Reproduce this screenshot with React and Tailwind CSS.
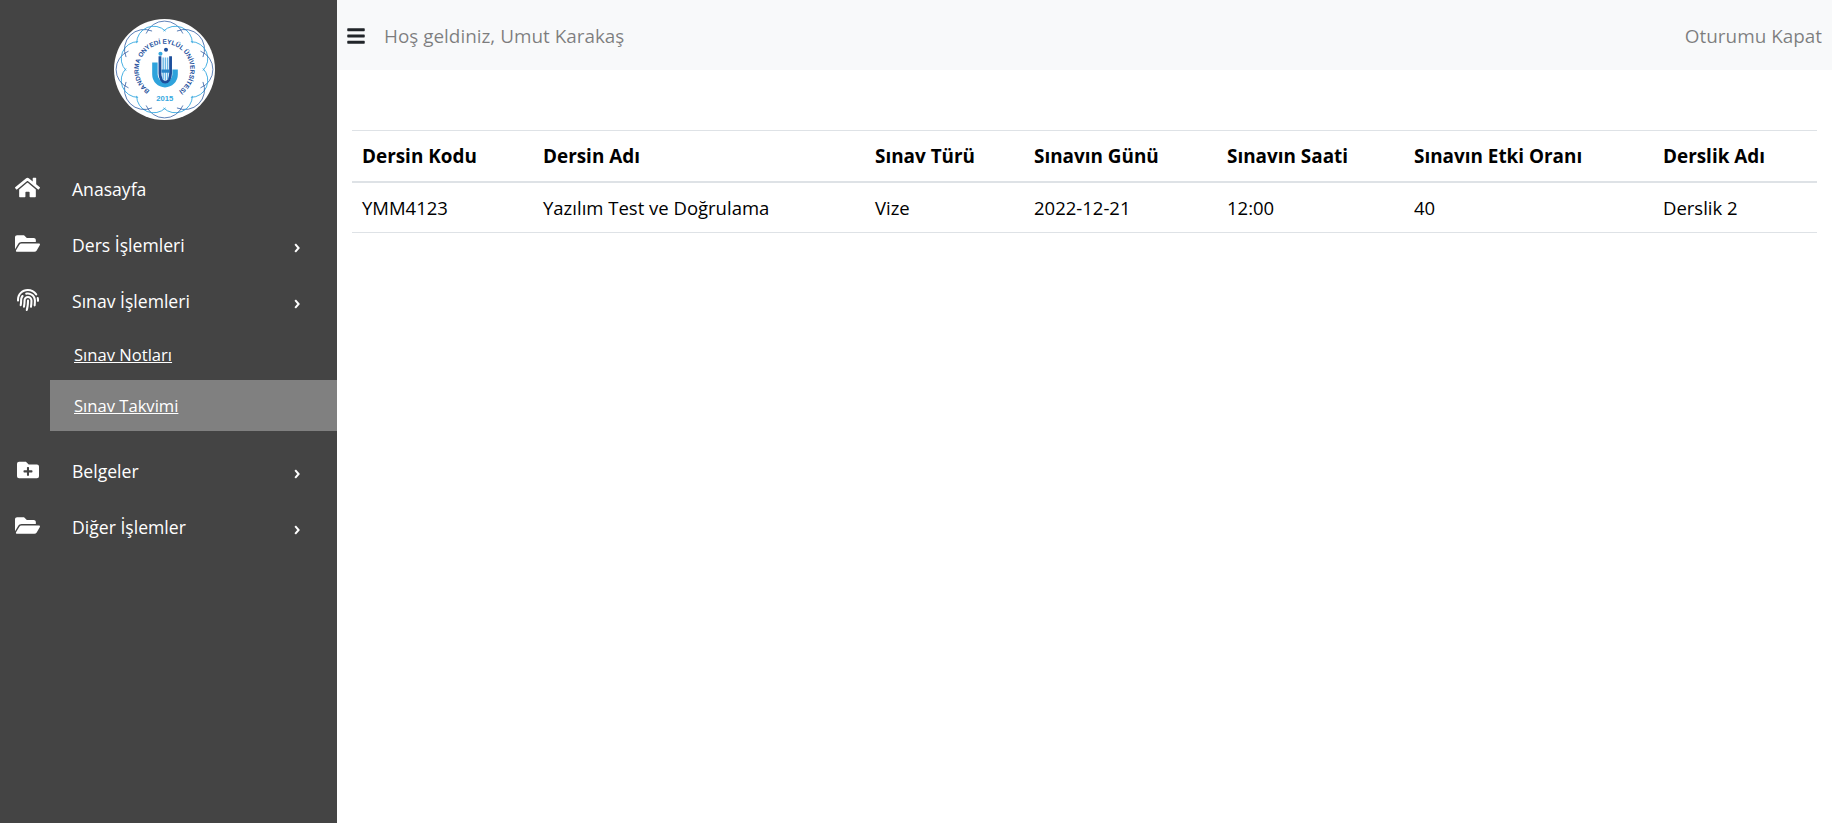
import React from "react";
import { FaHome, FaFolderOpen, FaFingerprint, FaFolderPlus, FaBars } from "react-icons/fa";

function Logo() {
  const angles = [0, 45, 90, 135, 180, 225, 270, 315];
  return (
    <svg viewBox="0 0 100 100" className="w-[101px] h-[101px] block">
      <circle cx="50" cy="50" r="50" fill="#fff" />
      {angles.map((a) => (
        <g key={a} fill="none">
          <path d="M31.8 14.4 A19.6 19.6 0 0 1 68.2 14.4" stroke="#1d4f9c" strokeWidth="0.7" transform={`rotate(${a} 50 50)`} />
          <path d="M34.5 15.3 A16.8 16.8 0 0 1 65.5 15.3" stroke="#35a8e0" strokeWidth="0.8" transform={`rotate(${a + 22.5} 50 50)`} />
        </g>
      ))}
      <circle cx="50" cy="50" r="32" fill="#fff" />
      <defs>
        <path id="logoArc" d="M35.4 70.9 A25.5 25.5 0 1 1 64.6 70.9" />
      </defs>
      <text fontSize="6.4" fontWeight="700" fill="#1d4f9c" fontFamily="'Liberation Sans', sans-serif">
        <textPath href="#logoArc" startOffset="0" textLength="129" lengthAdjust="spacing">BANDIRMA ONYEDİ EYLÜL ÜNİVERSİTESİ</textPath>
      </text>
      <path d="M40.5 43 V55 A10 10 0 0 0 60.5 55 V50" fill="none" stroke="#2fa3dc" strokeWidth="5.4" />
      <path d="M45.5 37 V54 A5.2 8.5 0 0 0 56 54 V37" fill="#fff" stroke="#1d4f9c" strokeWidth="2.8" />
      <path d="M48 38 h1.4 v22 h-1.4 Z M50.2 38 h1.4 v23 h-1.4 Z M52.4 38 h1.4 v22 h-1.4 Z" fill="#6db9e6" />
      <path d="M47 50 h8 v3.2 h-8 Z" fill="#2a86c8" />
      <circle cx="46" cy="34.5" r="2" fill="#35a8e0" />
      <circle cx="51.5" cy="30.5" r="2" fill="#1d4f9c" />
      <text x="50.3" y="81" fontSize="7.6" fontWeight="700" textAnchor="middle" fill="#35a8e0" fontFamily="'Liberation Sans', sans-serif">2015</text>
    </svg>
  );
}

function Chevron() {
  return (
    <svg viewBox="0 0 6 10" className="w-[6px] h-[10px] mt-[5px]">
      <path d="M1.2 1.2 L4.6 5 L1.2 8.8" fill="none" stroke="#fff" strokeWidth="2" />
    </svg>
  );
}

function Item({ icon: Icon, label, arrow = true, iconClass }) {
  return (
    <div className="flex items-center h-[56px] pl-[15px] pr-[37px] text-white">
      <span className="w-[57px] flex items-center mb-[3px]"><Icon className={iconClass} /></span>
      <span className="flex-1 text-[17.6px]">{label}</span>
      {arrow && <Chevron />}
    </div>
  );
}

const cols = ["w-[181px]", "w-[332px]", "w-[159px]", "w-[193px]", "w-[187px]", "w-[249px]", ""];
const heads = ["Dersin Kodu", "Dersin Adı", "Sınav Türü", "Sınavın Günü", "Sınavın Saati", "Sınavın Etki Oranı", "Derslik Adı"];
const row = ["YMM4123", "Yazılım Test ve Doğrulama", "Vize", "2022-12-21", "12:00", "40", "Derslik 2"];

export default function App() {
  return (
    <div className="flex h-screen overflow-hidden bg-white font-['Open_Sans','Noto_Sans',sans-serif]">
      <aside className="w-[337px] shrink-0 bg-[#444444]">
        <div className="h-[161px] flex justify-center pt-[19px] pr-[9px]"><Logo /></div>
        <Item icon={FaHome} label="Anasayfa" arrow={false} iconClass="text-[25px]" />
        <Item icon={FaFolderOpen} label="Ders İşlemleri" iconClass="text-[25px]" />
        <Item icon={FaFingerprint} label="Sınav İşlemleri" iconClass="text-[22px] ml-[2px]" />
        <div className="pl-[50px] mb-[12px] text-white text-[16.6px]">
          <div className="h-[51px] flex items-center pl-[24px] pt-[1px]"><span className="underline">Sınav Notları</span></div>
          <div className="h-[51px] flex items-center pl-[24px] pt-[1px] bg-[#808080]"><span className="underline">Sınav Takvimi</span></div>
        </div>
        <Item icon={FaFolderPlus} label="Belgeler" iconClass="text-[22px] ml-[2px]" />
        <Item icon={FaFolderOpen} label="Diğer İşlemler" iconClass="text-[25px]" />
      </aside>
      <main className="flex-1 min-w-0">
        <header className="h-[70px] bg-[#f8f9fa] flex items-center justify-between pl-[10px] pr-[10px] pt-[2px] text-[18.9px] text-[#00000080]">
          <div className="flex items-center">
            <FaBars className="text-[20px] text-[#212529] w-[18px]" />
            <span className="ml-[19px]">Hoş geldiniz, Umut Karakaş</span>
          </div>
          <span>Oturumu Kapat</span>
        </header>
        <div className="pt-[60px] px-[15px]">
          <table className="w-full table-fixed border-collapse text-[18.5px] text-black">
            <thead>
              <tr className="h-[51px] border-t border-t-[#dee2e6] border-b-2 border-b-[#dee2e6]">
                {heads.map((h, i) => (
                  <th key={h} className={`${cols[i]} px-[10px] pt-[1px] text-left font-bold text-[18.9px]`}>{h}</th>
                ))}
              </tr>
            </thead>
            <tbody>
              <tr className="h-[51px] border-b border-b-[#dee2e6]">
                {row.map((c) => (
                  <td key={c} className="px-[10px] pt-[2px]">{c}</td>
                ))}
              </tr>
            </tbody>
          </table>
        </div>
      </main>
    </div>
  );
}
